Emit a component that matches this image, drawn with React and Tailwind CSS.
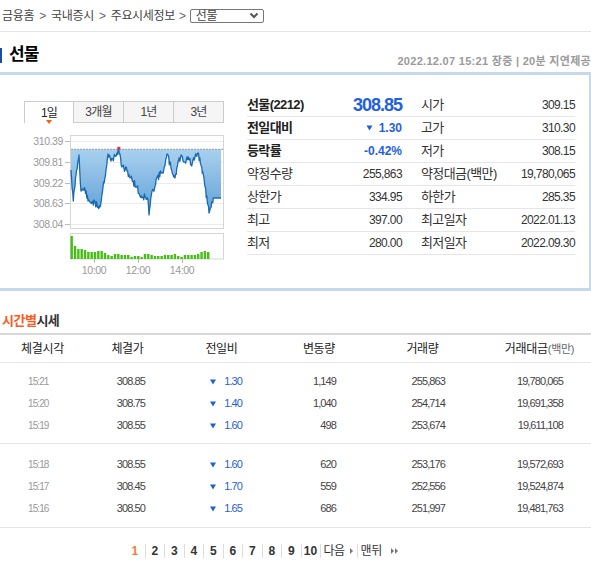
import React from 'react';

const PRICE_KEYS = [
  [1, 35], [3.3, 66], [6, 40], [9, 20], [11, 56], [15, 54], [18, 66], [22, 67], [27, 70], [30, 72],
  [33, 52], [36, 35], [38, 19], [41, 26], [45, 21], [47, 18], [48.7, 14], [52, 32], [57, 36], [62, 45],
  [67, 52], [70, 61], [75, 62], [78, 65], [79, 80], [80.7, 64], [83.3, 55], [86.7, 43], [91.7, 38],
  [95, 31], [97, 19], [101.7, 35], [105, 43], [108, 27], [111.7, 21], [115, 27], [118.3, 22], [121.7, 31],
  [125, 22], [128, 18], [131.7, 32], [135, 52], [138, 70], [139, 78], [141.7, 67], [143.3, 63], [151, 63],
];

const VOL = [23, 13, 10, 10, 9, 7, 7, 7, 8, 8, 6, 4, 3, 5, 5, 4, 4, 4, 2, 3, 3, 2, 5, 5, 4, 3, 3, 3, 4, 4, 4, 5, 3, 2, 4, 4, 4, 4, 5, 7, 8, 7];

function linePoints() {
  let seed = 11;
  const rnd = () => {
    seed = (seed * 9301 + 49297) % 233280;
    return seed / 233280;
  };
  const pts = [];
  for (let i = 0; i < PRICE_KEYS.length - 1; i++) {
    const [x0, y0] = PRICE_KEYS[i];
    const [x1, y1] = PRICE_KEYS[i + 1];
    const amp = i >= PRICE_KEYS.length - 2 ? 0 : 7;
    const steps = Math.max(1, Math.round((x1 - x0) / 0.6));
    for (let s = 0; s < steps; s++) {
      const t = s / steps;
      const x = x0 + (x1 - x0) * t;
      let y = y0 + (y1 - y0) * t + (s === 0 ? 0 : (rnd() - 0.5) * amp);
      y = Math.min(82, Math.max(14.5, y));
      pts.push([x, y]);
    }
  }
  pts.push(PRICE_KEYS[PRICE_KEYS.length - 1]);
  return pts;
}

function PriceChart() {
  const pts = linePoints();
  const base = 16.3;
  const seg = pts.map(([x, y]) => `L${(46 + x).toFixed(1)},${(2 + y).toFixed(1)}`).join('');
  const line = 'M' + seg.slice(1);
  const area = `M${46 + pts[0][0]},${base}${seg}L${46 + pts[pts.length - 1][0]},${base}Z`;
  const yLabels = [['310.39', 8], ['309.81', 29], ['309.22', 50], ['308.63', 70], ['308.04', 91]];
  const xLabels = [['10:00', 70], ['12:00', 114], ['14:00', 158]];

  return (
    <svg width="200" height="147" className="block" style={{ fontFamily: 'Liberation Sans, sans-serif' }}>
      <defs>
        <linearGradient id="pf" x1="0" y1="16" x2="0" y2="84" gradientUnits="userSpaceOnUse">
          <stop offset="0" stopColor="#a9d1ef" />
          <stop offset="1" stopColor="#5e9fd6" />
        </linearGradient>
      </defs>
      <rect x="46.5" y="2.5" width="153" height="93" fill="#fff" stroke="#d6d6d6" />
      {yLabels.map(([t, y]) => (
        <g key={t}>
          <line x1="47" x2="199" y1={y + 0.5} y2={y + 0.5} stroke="#ececec" />
          <line x1="41" x2="46" y1={y + 0.5} y2={y + 0.5} stroke="#bbb" />
          <text x="39" y={y + 4} textAnchor="end" fontSize="10.5" fill="#999" letterSpacing="-0.4">{t}</text>
        </g>
      ))}
      <path d={area} fill="url(#pf)" />
      <path d={line} fill="none" stroke="#1769b2" strokeWidth="1.3" strokeLinejoin="round" />
      <line x1="47" x2="199" y1={base} y2={base} stroke="#9a9a9a" strokeDasharray="2 1" />
      <rect x="93.3" y="13.8" width="3" height="3" fill="#e2304a" />

      <rect x="46.5" y="100.5" width="153" height="25.5" fill="#fff" stroke="#d6d6d6" />
      {VOL.map((h, i) => (
        <rect key={i} x={46 + 1.7 + i * 3.33 - 1.2} y={126 - h} width="2.4" height={h} fill="#44c014" />
      ))}
      {xLabels.map(([t, x]) => (
        <g key={t}>
          <line x1={x + 0.5} x2={x + 0.5} y1="126" y2="130" stroke="#bbb" />
          <text x={x} y="141" textAnchor="middle" fontSize="10.5" fill="#999" letterSpacing="-0.4">{t}</text>
        </g>
      ))}
    </svg>
  );
}

function DownTri({ className }) {
  return (
    <svg width="6" height="6" viewBox="0 0 6 6" className={className}>
      <polygon points="0,0.5 6,0.5 3,5.5" fill="currentColor" />
    </svg>
  );
}

const summary = [
  { l: '선물(2212)', v: '308.85', l2: '시가', v2: '309.15', kind: 'main' },
  { l: '전일대비', v: '1.30', l2: '고가', v2: '310.30', kind: 'diff' },
  { l: '등락률', v: '-0.42%', l2: '저가', v2: '308.15', kind: 'rate' },
  { l: '약정수량', v: '255,863', l2: '약정대금(백만)', v2: '19,780,065' },
  { l: '상한가', v: '334.95', l2: '하한가', v2: '285.35' },
  { l: '최고', v: '397.00', l2: '최고일자', v2: '2022.01.13' },
  { l: '최저', v: '280.00', l2: '최저일자', v2: '2022.09.30' },
];

const ticks = [
  [
    ['15:21', '308.85', '1.30', '1,149', '255,863', '19,780,065'],
    ['15:20', '308.75', '1.40', '1,040', '254,714', '19,691,358'],
    ['15:19', '308.55', '1.60', '498', '253,674', '19,611,108'],
  ],
  [
    ['15:18', '308.55', '1.60', '620', '253,176', '19,572,693'],
    ['15:17', '308.45', '1.70', '559', '252,556', '19,524,874'],
    ['15:16', '308.50', '1.65', '686', '251,997', '19,481,763'],
  ],
];

const cols = 'grid grid-cols-[85px_85px_103px_92px_115px_111px]';

export default function App() {
  return (
    <div className="h-[573px] w-[591px] overflow-hidden bg-white font-['Liberation_Sans','Noto_Sans_CJK_KR',sans-serif] text-[#333]">
      {/* breadcrumb */}
      <div className="flex h-[32px] items-center border-b border-[#e5e5e5] pl-[2px] text-[12px] tracking-[-0.3px] text-[#444]">
        <span>금융홈</span>
        <span className="mx-[5px] text-[#666]">&gt;</span>
        <span>국내증시</span>
        <span className="mx-[5px] text-[#666]">&gt;</span>
        <span>주요시세정보</span>
        <span className="mx-[4px] text-[#666]">&gt;</span>
        <div className="flex h-[14px] w-[74px] items-center justify-between rounded-[2px] border border-[#777] pl-[5px] pr-[4px]">
          <span className="leading-none">선물</span>
          <svg width="10" height="7" viewBox="0 0 10 7">
            <path d="M1.5 1.5 L5 5 L8.5 1.5" fill="none" stroke="#555" strokeWidth="2" />
          </svg>
        </div>
      </div>

      {/* title */}
      <div className="flex h-[40px] items-start justify-between pt-[13px]">
        <div className="flex h-[20px] items-center">
          <div className="h-[15px] w-[2px] bg-[#1c4da1]" />
          <span className="ml-[7px] text-[17px] font-bold leading-[20px] tracking-[-1px] text-black">선물</span>
        </div>
        <div className="mt-[9px] whitespace-nowrap text-[11px] font-bold leading-[14px] tracking-[0.3px] text-[#9a9a9a]">
          2022.12.07 15:21 장중 | 20분 지연제공
        </div>
      </div>

      {/* summary box */}
      <div className="flex h-[219px] border-b-[3px] border-r-2 border-t-[3px] border-[#c6d9ec]">
        <div className="w-[224px] pl-[24px] pt-[26px]">
          <div className="flex h-[22px] text-[12px] tracking-[-0.8px]">
            <div className="relative flex w-[50px] items-center justify-center border-l border-r border-t border-[#ccc] bg-white text-[#222]">
              1일
              <span className="absolute bottom-[-1px] left-1/2 h-0 w-0 -translate-x-1/2 border-l-[3px] border-r-[3px] border-t-[4px] border-l-transparent border-r-transparent border-t-[#ff6000]" />
            </div>
            <div className="flex w-[50px] items-center justify-center border-b border-r border-t border-[#ccc] bg-[#f5f5f5] text-[#444]">3개월</div>
            <div className="flex w-[50px] items-center justify-center border-b border-r border-t border-[#ccc] bg-[#f5f5f5] text-[#444]">1년</div>
            <div className="flex w-[50px] items-center justify-center border-b border-r border-t border-[#ccc] bg-[#f5f5f5] text-[#444]">3년</div>
          </div>
          <div className="mt-[10px]">
            <PriceChart />
          </div>
        </div>

        <div className="ml-[23px] w-[328px] pt-[19px]">
          {summary.map((r) => (
            <div key={r.l} className="flex h-[23px] items-center border-b border-[#e6e6e6]">
              <div className="flex w-[155px] items-center justify-between">
                <span className={`text-[13px] tracking-[-0.6px] ${r.kind ? 'font-bold text-[#222]' : 'text-[#333]'}`}>{r.l}</span>
                {r.kind === 'main' && (
                  <span className="text-[18px] font-bold tracking-[-1px] text-[#1f5fe0]">{r.v}</span>
                )}
                {r.kind === 'diff' && (
                  <span className="flex items-center text-[12px] font-bold text-[#1f5fe0]">
                    <DownTri className="mr-[6px] h-[6px] w-[7px]" />
                    {r.v}
                  </span>
                )}
                {r.kind === 'rate' && <span className="text-[12px] font-bold text-[#1f5fe0]">{r.v}</span>}
                {!r.kind && <span className="text-[12px] tracking-[-0.6px] text-[#333]">{r.v}</span>}
              </div>
              <div className="ml-[19px] flex w-[154px] items-center justify-between">
                <span className="text-[13px] tracking-[-0.6px] text-[#333]">{r.l2}</span>
                <span className="text-[12px] tracking-[-0.6px] text-[#333]">{r.v2}</span>
              </div>
            </div>
          ))}
        </div>
      </div>

      {/* time table */}
      <div className="flex h-[44px] items-end border-b-2 border-[#d8d8d8] pb-[4px] pl-[2px] text-[13px] font-bold leading-[16px] tracking-[-0.5px]">
        <span className="text-[#ff5a1e]">시간별</span>
        <span className="text-[#333]">시세</span>
      </div>
      <div className={`${cols} h-[28px] items-center border-b border-[#e6e6e6] text-center text-[12px] tracking-[-0.3px] text-[#222]`}>
        <span>체결시각</span>
        <span>체결가</span>
        <span>전일비</span>
        <span>변동량</span>
        <span>거래량</span>
        <span className="pl-[8px]">
          거래대금<span className="text-[11px] text-[#666]">(백만)</span>
        </span>
      </div>
      {ticks.map((group, gi) => (
        <div key={gi} className={`border-b border-[#e6e6e6] ${gi === 0 ? 'pb-[7px] pt-[7px]' : 'pb-[8px] pt-[9px]'}`}>
          {group.map((r) => (
            <div key={r[0]} className={`${cols} h-[22px] items-center text-[11px] tracking-[-0.9px] text-[#444]`}>
              <span className="pl-[28px] text-[10px] text-[#999]">{r[0]}</span>
              <span className="pr-[25px] text-right">{r[1]}</span>
              <span className="flex items-center justify-end pr-[31px] text-[#1f5fd8]">
                <DownTri className="mr-[8px] mt-[2px] h-[6px] w-[6px]" />
                {r[2]}
              </span>
              <span className="pr-[29px] text-right">{r[3]}</span>
              <span className="pr-[35px] text-right">{r[4]}</span>
              <span className="pr-[28px] text-right">{r[5]}</span>
            </div>
          ))}
        </div>
      ))}

      {/* pagination */}
      <div className="mt-[16px] flex h-[14px] items-center pl-[125px]">
        {[1, 2, 3, 4, 5, 6, 7, 8, 9, 10].map((p, i) => (
          <span
            key={p}
            className={`flex h-[14px] items-center justify-center text-[12px] font-bold ${i > 0 ? 'border-l border-[#ddd]' : ''} ${p === 1 ? 'text-[#ff7a33]' : 'text-[#333]'} ${p === 10 ? 'w-[19px]' : 'w-[19.5px]'}`}
          >
            {p}
          </span>
        ))}
        <span className="flex h-[14px] items-center border-l border-[#ddd] pl-[3px] text-[12px] tracking-[-0.5px] text-[#333]">
          다음
          <span className="ml-[5px] h-0 w-0 border-b-[3px] border-l-[3px] border-t-[3px] border-b-transparent border-l-[#777] border-t-transparent" />
        </span>
        <span className="ml-[4px] flex h-[14px] items-center border-l border-[#ddd] pl-[3px] text-[12px] tracking-[-0.5px] text-[#333]">
          맨뒤
          <span className="ml-[9px] h-0 w-0 border-b-[3px] border-l-[3px] border-t-[3px] border-b-transparent border-l-[#777] border-t-transparent" />
          <span className="ml-[1px] h-0 w-0 border-b-[3px] border-l-[3px] border-t-[3px] border-b-transparent border-l-[#777] border-t-transparent" />
        </span>
      </div>
    </div>
  );
}
